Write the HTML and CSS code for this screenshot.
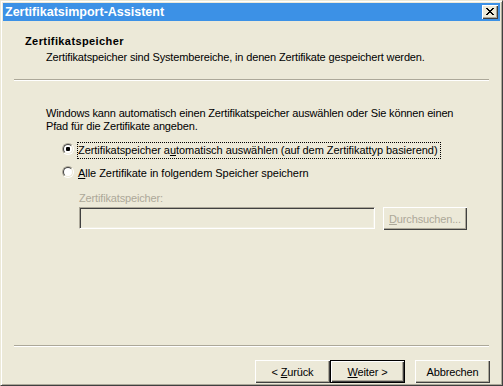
FILE: index.html
```html
<!DOCTYPE html>
<html lang="de">
<head>
    <meta charset="UTF-8">
    <meta name="viewport" content="width=device-width, initial-scale=1.0">
    <title>Zertifikatsimport-Assistent</title>
    <link rel="stylesheet" href="styles.css">
</head>
<body>

    <div class="window">
        <div class="titlebar">
            <span class="title">Zertifikatsimport-Assistent</span>
            <button class="close-btn" title="Schließen">
                <svg width="16" height="14" viewBox="0 0 16 14" shape-rendering="crispEdges">
                    <path fill="#000" d="M4 3h2v1h-2z M10 3h2v1h-2z M5 4h2v1h-2z M9 4h2v1h-2z M6 5h4v1h-4z M7 6h2v1h-2z M6 7h4v1h-4z M5 8h2v1h-2z M9 8h2v1h-2z M4 9h2v1h-2z M10 9h2v1h-2z"/>
                </svg>
            </button>
        </div>

        <!-- Kopfbereich -->
        <div class="header">
            <div class="header-title">Zertifikatspeicher</div>
            <div class="header-sub">Zertifikatspeicher sind Systembereiche, in denen Zertifikate gespeichert werden.</div>
        </div>
        <div class="separator"></div>

        <div class="content">
            <p class="intro">Windows kann automatisch einen Zertifikatspeicher auswählen oder Sie können einen<br>Pfad für die Zertifikate angeben.</p>

            <div class="radio-row">
                <span class="radio"><span class="dot"></span></span>
                <span class="radio-label focused">Zertifikatspeicher a<u>u</u>tomatisch auswählen (auf dem Zertifikattyp basierend)</span>
            </div>
            <div class="radio-row second">
                <span class="radio"></span>
                <span class="radio-label"><u>A</u>lle Zertifikate in folgendem Speicher speichern</span>
            </div>

            <div class="store-label">Zertifikatspeicher:</div>
            <div class="store-row">
                <div class="textbox"></div>
                <button class="btn browse-btn" disabled><u>D</u>urchsuchen...</button>
            </div>
        </div>

        <div class="separator"></div>
        <div class="buttons">
            <button class="btn">&lt; <u>Z</u>urück</button>
            <button class="btn default-btn"><u>W</u>eiter &gt;</button>
            <button class="btn cancel-btn">Abbrechen</button>
        </div>
    </div>

</body>
</html>
```

FILE: styles.css
```css
body {
    margin: 0;
    font-family: "Liberation Sans", Arial, sans-serif;
    font-size: 11px;
    line-height: 13px;
    color: #000;
    background-color: #ece9d8;
}

.window {
    width: 503px;
    height: 386px;
    box-sizing: border-box;
    display: flex;
    flex-direction: column;
    padding: 2px;
    background-color: #ece9d8;
    border: 1px solid;
    border-color: #ece9d8 #404040 #404040 #ece9d8;
    box-shadow: inset 1px 1px #fff, inset -1px -1px #aca899;
}

.titlebar {
    height: 18px;
    display: flex;
    align-items: flex-start;
    justify-content: space-between;
    background-color: #3c91e6;
}

.title {
    padding-left: 2px;
    color: #fff;
    font-weight: bold;
    font-size: 12.5px;
    line-height: 18px;
}

.close-btn {
    width: 16px;
    height: 14px;
    margin: 2px 2px 0 0;
    padding: 0;
    border: none;
    background-color: #ece9d8;
    box-shadow: inset 1px 1px #fff, inset -1px -1px #404040, inset -2px -2px #aca899;
    display: block;
}

.close-btn svg {
    display: block;
}

.header {
    height: 58px;
    box-sizing: border-box;
    padding: 14px 0 0 22px;
}

.header-title {
    font-weight: bold;
    letter-spacing: 0.4px;
}

.header-sub {
    margin-top: 3px;
    padding-left: 21px;
    letter-spacing: -0.15px;
}

.separator {
    height: 0;
    margin: 0 11px;
    border-top: 1px solid #aca899;
    border-bottom: 1px solid #fff;
}

.content {
    flex: 1;
    letter-spacing: -0.15px;
}

.intro {
    margin: 26px 0 0 43px;
}

.radio-row {
    display: flex;
    align-items: flex-start;
    margin: 9px 0 0 59px;
}

.radio-row.second {
    margin-top: 6px;
}

.radio {
    width: 12px;
    height: 12px;
    box-sizing: border-box;
    margin-top: 1px;
    border-radius: 50%;
    border: 1px solid;
    border-color: #aca899 #fff #fff #aca899;
    position: relative;
}

/* Innerer Ring des Optionsfelds */
.radio::before {
    content: "";
    position: absolute;
    inset: 0;
    border-radius: 50%;
    border: 1px solid;
    border-color: #404040 #ece9d8 #ece9d8 #404040;
    background-color: #fff;
}

.radio .dot {
    position: absolute;
    left: 3px;
    top: 3px;
    width: 4px;
    height: 4px;
    border-radius: 1px;
    background-color: #000;
    z-index: 1;
}

.radio-label {
    margin-left: 3px;
    padding: 1px 2px 1px 0;
    border: 1px solid transparent;
    letter-spacing: -0.05px;
}

.radio-label.focused {
    border: 1px dotted #000;
}

u {
    text-underline-offset: 1px;
}

.store-label {
    margin: 10px 0 0 76px;
    color: #aca899;
}

.store-row {
    display: flex;
    align-items: flex-start;
    gap: 8px;
    margin: 2px 0 0 76px;
}

.textbox {
    width: 296px;
    height: 22px;
    box-sizing: border-box;
    border: 1px solid;
    border-color: #aca899 #fff #fff #aca899;
    box-shadow: inset 1px 1px #404040, inset -1px -1px #f1efe2;
    background-color: #ece9d8;
}

.btn {
    width: 75px;
    height: 23px;
    padding: 0;
    border: none;
    font-family: inherit;
    font-size: 11px;
    letter-spacing: -0.15px;
    color: #000;
    background-color: #ece9d8;
    box-shadow: inset 1px 1px #fff, inset -1px -1px #404040, inset -2px -2px #aca899;
}

.browse-btn {
    width: 84px;
    color: #aca899;
}

.buttons {
    display: flex;
    justify-content: flex-end;
    padding: 13px 10px 0 0;
}

.default-btn {
    border: 1px solid #000;
}

.cancel-btn {
    margin-left: 10px;
}
```
